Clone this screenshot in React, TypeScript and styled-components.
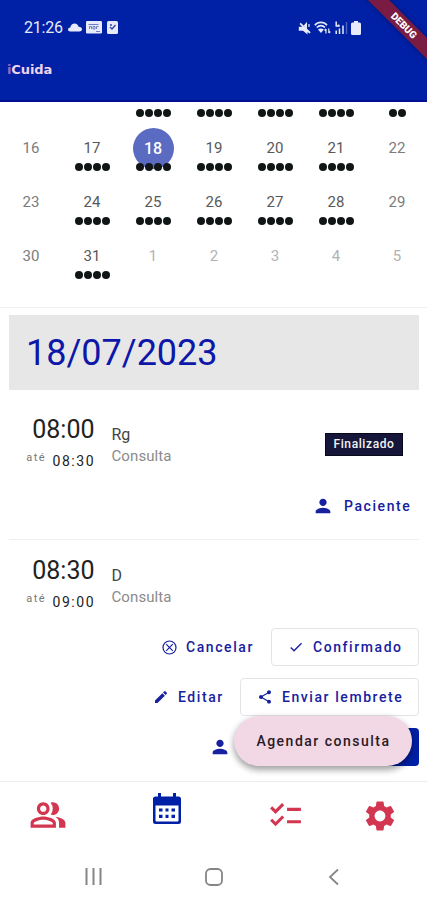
import React from "react";
import styled, { createGlobalStyle } from "styled-components";
import { MdCheck, MdChecklist, MdEdit, MdOutlinePeopleAlt, MdPerson, MdSettings, MdShare } from "react-icons/md";

const BLUE = "#0020a5";
const RED = "#d23650";

const GlobalStyle = createGlobalStyle`
  * { box-sizing: border-box; }
  body { margin: 0; background: #fff; }
`;

const Screen = styled.div`
  position: relative;
  display: flex;
  flex-direction: column;
  width: 427px;
  height: 900px;
  overflow: hidden;
  background: #fff;
  font-family: Roboto, sans-serif;
  svg { display: block; flex: none; }
`;

const Header = styled.header`
  flex: none;
  height: 102px;
  padding: 17px 0 0 7px;
  background: ${BLUE};
  border-bottom: 2px solid #00108f;
`;

const StatusBar = styled.div`
  display: flex;
  justify-content: space-between;
  align-items: center;
  height: 21px;
  padding: 0 66px 0 17px;
  color: #e6eafa;
`;

const StatusGroup = styled.div<{ $gap: number }>`
  display: flex;
  align-items: center;
  gap: ${(p) => p.$gap}px;
`;

const Clock = styled.span`
  width: 39px;
  font-size: 16px;
  letter-spacing: -0.2px;
  white-space: nowrap;
`;

const AppTitle = styled.h1`
  margin: 23px 0 0;
  font: 700 13px/18px "DejaVu Sans", sans-serif;
  letter-spacing: -0.1px;
  color: #efd3ed;
  span { color: #9c68bd; }
`;

const DebugRibbon = styled.div`
  position: absolute;
  top: 18px;
  right: -37px;
  width: 120px;
  height: 15px;
  transform: rotate(45deg);
  background: #791b42;
  box-shadow: 0 0 5px rgba(0, 0, 0, 0.35);
  color: #fff;
  font-size: 10px;
  font-weight: 900;
  line-height: 15px;
  text-align: center;
`;

const Calendar = styled.section`
  flex: none;
  height: 205px;
  margin-left: 0.5px;
`;

const Week = styled.div<{ $clipped?: boolean }>`
  display: grid;
  grid-template-columns: repeat(7, 61px);
  height: ${(p) => (p.$clipped ? 25.6 : 54)}px;
  padding-top: ${(p) => (p.$clipped ? 7 : 0)}px;
`;

const Day = styled.div`
  display: flex;
  flex-direction: column;
  align-items: center;
`;

const DayNumber = styled.span<{ $tone: string }>`
  width: 41px;
  height: 41px;
  border-radius: 50%;
  font-size: ${(p) => (p.$tone === "selected" ? 16 : 15)}px;
  font-weight: ${(p) => (p.$tone === "selected" ? 500 : 400)};
  line-height: 41px;
  text-align: center;
  background: ${(p) => (p.$tone === "selected" ? "#5b6bc2" : "transparent")};
  color: ${(p) => ({ selected: "#fff", weekend: "#7c7c7c", outside: "#b2b2b2" }[p.$tone] ?? "#585858")};
`;

const Dots = styled.div<{ $overlap: boolean }>`
  display: flex;
  gap: 1px;
  margin-top: ${(p) => (p.$overlap ? -6 : 0)}px;
`;

const Dot = styled.i`
  width: 8px;
  height: 8px;
  border-radius: 50%;
  background: #101516;
`;

const Agenda = styled.main`
  flex: none;
  height: 474px;
  padding: 7px 8px 0 9px;
  border-top: 1px solid #f0f0f0;
`;

const DateBanner = styled.h2`
  margin: 0;
  height: 75px;
  padding-left: 17px;
  background: #e7e7e7;
  color: #0d17a8;
  font-size: 36px;
  font-weight: 400;
  line-height: 76px;
  letter-spacing: 0;
`;

const Appointment = styled.article<{ $height: number }>`
  height: ${(p) => p.$height}px;
  border-bottom: 1px solid #f0f0f0;
  &:last-child { border-bottom: 0; }
`;

const Summary = styled.div<{ $offset: number }>`
  display: grid;
  grid-template-columns: 85.5px 1fr auto;
  column-gap: 17px;
  padding-top: ${(p) => p.$offset}px;
`;

const Times = styled.div`
  display: flex;
  flex-direction: column;
  align-items: flex-end;
`;

const StartTime = styled.div`
  font-size: 25px;
  line-height: 30px;
  color: #222;
`;

const EndTime = styled.div`
  display: flex;
  gap: 6.5px;
  margin-right: -0.6px;
  font-size: 14px;
  letter-spacing: 1.55px;
  line-height: 20px;
  color: #222;
  margin-top: 6px;
  small {
    margin-top: -3px;
    font-size: 11px;
    color: #777;
    letter-spacing: 1.4px;
  }
`;

const Person = styled.div`
  padding-top: 9px;
  font-size: 16px;
  line-height: 22px;
  color: #444;
  p { margin: 0; font-size: 15px; line-height: 21px; color: #8b8b8b; letter-spacing: 0.1px; }
`;

const Badge = styled.span`
  height: 23px;
  width: 78px;
  margin: 18px 16px 0 0;
  border: 1px solid #08081a;
  background: #16163a;
  color: #f2f2f2;
  font-size: 12px;
  font-weight: 500;
  letter-spacing: 0.6px;
  line-height: 21px;
  text-align: center;
`;

const Actions = styled.div<{ $top: number }>`
  display: flex;
  justify-content: flex-end;
  margin-top: ${(p) => p.$top}px;
`;

const Action = styled.button<{ $width?: number; $outlined?: boolean; $gap?: number }>`
  display: flex;
  align-items: center;
  gap: ${(p) => p.$gap ?? 9}px;
  width: ${(p) => (p.$width ? `${p.$width}px` : "auto")};
  height: 38px;
  padding: 0 0 0 ${(p) => (p.$outlined ? 16 : 0)}px;
  border: ${(p) => (p.$outlined ? "1px solid #e4e4e8" : "0")};
  border-radius: 4px;
  background: none;
  color: #1721a0;
  font: 500 14px Roboto, sans-serif;
  letter-spacing: 1.57px;
  white-space: nowrap;
`;

const PrimaryAction = styled.button`
  width: 94px;
  height: 38px;
  border: 0;
  border-radius: 4px;
  background: ${BLUE};
`;

const Fab = styled.button`
  position: absolute;
  left: 234px;
  top: 716px;
  width: 178px;
  height: 50px;
  border: 0;
  border-radius: 25px;
  background: #f1d8e4;
  box-shadow: 0 4px 6px rgba(0, 0, 0, 0.3), 0 2px 8px rgba(0, 0, 0, 0.12);
  color: #2b1a26;
  font: 500 14px/50px Roboto, sans-serif;
  letter-spacing: 1.5px;
  padding: 0 0 0 1px;
  white-space: nowrap;
`;

const Tabs = styled.nav`
  display: grid;
  grid-template-columns: 95px 143px 95px 94px;
  flex: none;
  height: 71px;
  border-top: 1px solid #ececec;
  color: ${RED};
`;

const Tab = styled.a<{ $lift?: number }>`
  display: flex;
  justify-content: center;
  align-items: center;
  padding-bottom: ${(p) => p.$lift ?? 4}px;
`;

const SystemNav = styled.footer`
  display: grid;
  grid-template-columns: repeat(3, 120px);
  height: 48px;
  padding: 1px 0 0 33.5px;
  align-items: center;
  justify-items: center;
  color: #858585;
`;

const WEEKS: { days: number[]; dots: number[] }[] = [
  { days: [16, 17, 18, 19, 20, 21, 22], dots: [0, 4, 4, 4, 4, 4, 0] },
  { days: [23, 24, 25, 26, 27, 28, 29], dots: [0, 4, 4, 4, 4, 4, 0] },
  { days: [30, 31, 1, 2, 3, 4, 5], dots: [0, 4, 0, 0, 0, 0, 0] },
];

function toneOf(day: number, column: number) {
  if (day === 18) return "selected";
  if (day < 10) return "outside";
  return column === 0 || column === 6 ? "weekend" : "weekday";
}

function EventDots({ count, overlap = true }: { count: number; overlap?: boolean }) {
  return (
    <Dots $overlap={overlap}>
      {Array.from({ length: count }, (_, i) => <Dot key={i} />)}
    </Dots>
  );
}

function CloudIcon() {
  return (
    <svg width="14" height="9" viewBox="0 0 14 9" fill="currentColor">
      <path d="M2.200 8.500C.8 8.500 0 7.600 0 6.500 0 5.300 1 4.600 2.300 4.500 2.800 2 4.500.5 6.600.5c2.200 0 3.500 1.300 4 3.200C12.700 3.800 14 4.900 14 6.300c0 1.300-1 2.200-2.400 2.200z" />
    </svg>
  );
}

function MessageIcon() {
  return (
    <svg width="16" height="13" viewBox="0 0 16 13">
      <rect width="16" height="12.500" rx="1.200" fill="#e6eafa" />
      <path d="M3.500 8V5.500h2V8M7 5.500h2V8H7zM10.500 8V5.500h2M2.500 3.500h10M10 10.500h4" fill="none" stroke="#6f7dc6" strokeWidth="1" />
    </svg>
  );
}

function TaskIcon() {
  return (
    <svg width="11" height="13" viewBox="0 0 11 13">
      <rect width="11" height="13" rx="1.500" fill="#e6eafa" />
      <path d="M3 6l2 2 3.500-4M3 4h2" fill="none" stroke="#3446aa" strokeWidth="1.400" />
    </svg>
  );
}

function MutedIcon() {
  return (
    <svg width="13" height="14" viewBox="0 0 13 14" fill="currentColor">
      <path d="M.8 9.800V5.800h3.500L1.500 3l1.200-1.200 10 9.500-1.200 1.200L9.500 11v2.500L5 9.800zM9 .8v7L5.800 4.500z" />
      <path d="M11 3v3" stroke="currentColor" strokeWidth="1.200" />
    </svg>
  );
}

function WifiIcon() {
  return (
    <svg width="17" height="14" viewBox="0 0 17 14" fill="none" stroke="currentColor">
      <path d="M.8 4.200C4 .5 9.800.5 13 4.200M2.800 6.500c2.400-2.500 5.800-2.500 8.200 0" strokeWidth="1.700" />
      <path d="M4 8.600c1.800-1.500 4-1.500 5.800 0L7 12z" fill="currentColor" stroke="none" />
      <path d="M12 12.500V8m-1.500 1.500L12 8M14.800 7.500V12m1.500-1.500L14.800 12" strokeWidth="1.200" />
    </svg>
  );
}

function SignalIcon() {
  return (
    <svg width="13" height="14" viewBox="0 0 13 14" fill="none" stroke="currentColor">
      <path d="M1.200.5v5M3.500 3.500v2M.8 5h4M1.200 9.500V13M4.500 7.500V13M8 4.500V13" strokeWidth="1.500" />
      <path d="M11.500 1v12" strokeWidth="1.300" opacity=".35" />
    </svg>
  );
}

function BatteryIcon() {
  return (
    <svg width="10" height="14" viewBox="0 0 10 14" fill="currentColor">
      <path d="M3 0h4v1.500h1.500Q10 1.500 10 3v9.500Q10 14 8.500 14h-7Q0 14 0 12.500V3q0-1.500 1.500-1.500H3z" />
    </svg>
  );
}

function CancelIcon() {
  return (
    <svg width="15" height="15" viewBox="0 0 15 15" fill="none" stroke="currentColor" strokeWidth="1.200">
      <circle cx="7.500" cy="7.500" r="6.500" />
      <path d="M4.200 4.200l6.600 6.600M10.800 4.200l-6.600 6.600" />
    </svg>
  );
}

function CalendarIcon() {
  return (
    <svg width="28" height="31" viewBox="0 0 28 31">
      <path fillRule="evenodd" fill={BLUE} d="M5 0h3v3.500h12V0h3v3.500h2.500Q28 3.500 28 6v22.500Q28 31 25.500 31h-23Q0 31 0 28.500V6q0-2.500 2.500-2.500H5zM2.500 12.500v15q0 1 1 1h21q1 0 1-1v-15z" />
      <path d="M6 17h3.500M12.500 17h3M18.500 17H22M6 23.300h3.500M12.500 23.300h3M18.500 23.300H22" stroke={BLUE} strokeWidth="3.200" />
    </svg>
  );
}

export default function App() {
  return (
    <Screen>
      <GlobalStyle />
      <Header>
        <StatusBar>
          <StatusGroup $gap={4.5}>
            <Clock>21:26</Clock>
            <CloudIcon />
            <MessageIcon />
            <TaskIcon />
          </StatusGroup>
          <StatusGroup $gap={3.5}>
            <MutedIcon />
            <WifiIcon />
            <SignalIcon />
            <BatteryIcon />
          </StatusGroup>
        </StatusBar>
        <AppTitle><span>i</span>Cuida</AppTitle>
      </Header>
      <DebugRibbon>DEBUG</DebugRibbon>

      <Calendar>
        <Week $clipped>
          {[0, 0, 4, 4, 4, 4, 2].map((count, i) => (
            <Day key={i}><EventDots count={count} overlap={false} /></Day>
          ))}
        </Week>
        {WEEKS.map((week) => (
          <Week key={week.days[0]}>
            {week.days.map((day, i) => (
              <Day key={day}>
                <DayNumber $tone={toneOf(day, i)}>{day}</DayNumber>
                <EventDots count={week.dots[i]} />
              </Day>
            ))}
          </Week>
        ))}
      </Calendar>

      <Agenda>
        <DateBanner>18/07/2023</DateBanner>
        <Appointment $height={149.5}>
          <Summary $offset={25}>
            <Times>
              <StartTime>08:00</StartTime>
              <EndTime><small>até</small>08:30</EndTime>
            </Times>
            <Person>Rg<p>Consulta</p></Person>
            <Badge>Finalizado</Badge>
          </Summary>
          <Actions $top={16}>
            <Action $width={107} $gap={10}><MdPerson size={22} />Paciente</Action>
          </Actions>
        </Appointment>
        <Appointment $height={240}>
          <Summary $offset={16}>
            <Times>
              <StartTime>08:30</StartTime>
              <EndTime><small>até</small>09:00</EndTime>
            </Times>
            <Person>D<p>Consulta</p></Person>
          </Summary>
          <Actions $top={16.5}>
            <Action $width={109}><CancelIcon />Cancelar</Action>
            <Action $outlined $width={148}><MdCheck size={16} />Confirmado</Action>
          </Actions>
          <Actions $top={12}>
            <Action $width={87}><MdEdit size={16} />Editar</Action>
            <Action $outlined $width={179}><MdShare size={16} />Enviar lembrete</Action>
          </Actions>
          <Actions $top={11.5}>
            <Action $width={116}><MdPerson size={22} /></Action>
            <PrimaryAction aria-label="Atender" />
          </Actions>
        </Appointment>
      </Agenda>

      <Fab>Agendar consulta</Fab>

      <Tabs>
        <Tab><MdOutlinePeopleAlt size={38} /></Tab>
        <Tab $lift={17}><CalendarIcon /></Tab>
        <Tab><MdChecklist size={37} /></Tab>
        <Tab $lift={3}><MdSettings size={36} /></Tab>
      </Tabs>
      <SystemNav>
        <svg width="17" height="17" viewBox="0 0 17 17" stroke="currentColor" strokeWidth="2"><path d="M1.500 0v17M8.500 0v17M15.500 0v17" /></svg>
        <svg width="18" height="18" viewBox="0 0 18 18" fill="none" stroke="currentColor" strokeWidth="1.800"><rect x="1" y="1" width="16" height="16" rx="4.500" /></svg>
        <svg width="11" height="18" viewBox="0 0 11 18" fill="none" stroke="currentColor" strokeWidth="1.800"><path d="M10 1.500 2 9l8 7.500" /></svg>
      </SystemNav>
    </Screen>
  );
}
